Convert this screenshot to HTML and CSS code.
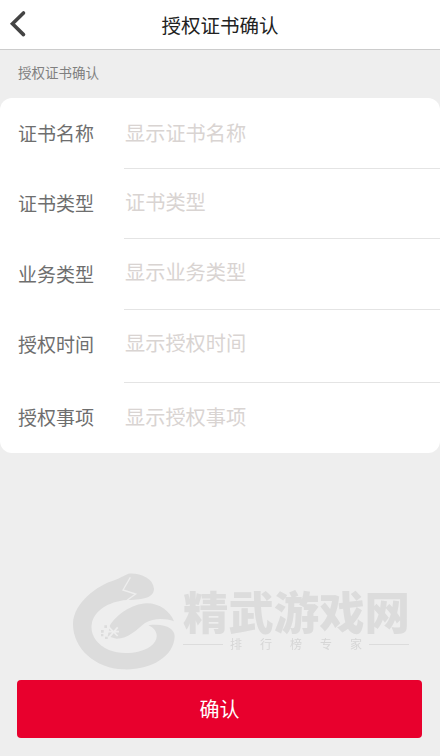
FILE: index.html
```html
<!DOCTYPE html>
<html lang="zh-CN">
<head>
<meta charset="utf-8">
<title>授权证书确认</title>
<link rel="stylesheet" href="styles.css">
</head>
<body>
<div class="page">
  <header class="topbar">
    <svg class="back" width="32" height="48" viewBox="0 0 32 48"><path d="M23.5 13 L12.5 23.8 L23.5 34.6" fill="none" stroke="#444" stroke-width="3.6" stroke-linecap="round" stroke-linejoin="miter"/></svg>
    <h1 class="title">授权证书确认</h1>
  </header>
  <div class="section">授权证书确认</div>
  <section class="card">
    <div class="row row-a"><span class="label">证书名称</span><span class="value">显示证书名称</span></div>
    <div class="row row-b"><span class="label">证书类型</span><span class="value">证书类型</span></div>
    <div class="row row-c"><span class="label">业务类型</span><span class="value">显示业务类型</span></div>
    <div class="row row-d"><span class="label">授权时间</span><span class="value">显示授权时间</span></div>
    <div class="row row-e"><span class="label">授权事项</span><span class="value">显示授权事项</span></div>
  </section>
  <div class="watermark">
    <svg class="logo" width="115" height="105" viewBox="0 0 345 315">
      <path fill="#dcdcdc" d="M150 36 C95 52 27 105 24 165 C22 240 90 302 175 304 C255 307 327 268 329 205 C329 185 305 165 250 172 C280 185 285 215 255 236 C225 256 170 262 132 246 C95 230 76 200 80 170 C85 130 130 100 185 96 C225 95 267 92 267 62 C264 30 225 14 190 17 C178 22 165 30 150 36Z"/>
      <path fill="#dcdcdc" d="M135 172 C155 140 200 108 245 106 C285 106 315 130 327 160 C300 150 265 150 240 165 C215 185 190 212 155 212 L128 205Z"/>
      <path fill="none" stroke="#eeeeee" stroke-width="4" d="M196 28 L174 66 L212 78 L186 97"/>
      <path fill="none" stroke="#eeeeee" stroke-width="5" d="M130 176 L158 204 M158 178 L132 208 M120 191 L162 191"/>
      <path fill="#dcdcdc" d="M108 186h8v8h-8zM108 198h7v7h-7zM118 172h8v8h-8zM120 206h8v7h-8z"/>
    </svg>
    <div class="brand">
      <div class="brand-name">精武游戏网</div>
      <div class="brand-sub"><i class="rule"></i><span class="slogan">排行榜专家</span><i class="rule"></i></div>
    </div>
  </div>
  <button class="confirm" type="button">确认</button>
</div>
</body>
</html>
```
FILE: styles.css
```css
* { box-sizing: border-box; }
html, body { margin: 0; padding: 0; }
body { font-family: "Noto Sans CJK SC", "Noto Sans", sans-serif; background: #eeeeee; }
.page { width: 440px; height: 756px; display: flex; flex-direction: column; background: #eeeeee; overflow: hidden; }
.topbar { height: 50px; flex: none; display: flex; align-items: center; justify-content: center; background: #fff; border-bottom: 1px solid #cccccc; position: relative; }
.back { position: absolute; left: 0; top: 0; }
.title { margin: 0; font-size: 19.5px; font-weight: 400; color: #222; line-height: 48px; }
.section { height: 48px; flex: none; padding-left: 18px; font-size: 13.5px; line-height: 45px; color: #808080; }
.card { flex: none; background: #fff; border-radius: 12px; display: flex; flex-direction: column; }
.row { display: flex; align-items: stretch; }
.row-a { height: 71px; }
.row-b { height: 70px; }
.row-c { height: 71px; }
.row-d { height: 73px; }
.row-e { height: 70px; }
.label { width: 124px; flex: none; padding: 0 0 3px 18px; font-size: 19px; color: #6e6e6e; display: flex; align-items: center; }
.value { flex: 1; padding: 0 0 1px 1px; font-size: 20.2px; color: #d9d4d2; display: flex; align-items: center; border-bottom: 1px solid #e4e4e4; }
.row-b .value, .row-c .value { padding-bottom: 5px; }
.row-d .label, .row-d .value { padding-bottom: 7px; }
.row-e .value { border-bottom: none; padding-bottom: 3px; }
.watermark { flex: none; display: flex; align-items: flex-start; margin: 115px 0 0 65px; height: 112px; }
.logo { flex: none; display: block; filter: blur(0.5px); }
.brand { flex: none; margin: 20px 0 0 3px; width: 226px; filter: blur(0.3px); }
.brand-name { font-size: 45.4px; line-height: 44px; font-weight: 900; color: #dcdcdc; white-space: nowrap; }
.brand-sub { display: flex; align-items: center; justify-content: space-between; height: 16px; margin-top: 4px; }
.rule { display: block; width: 40px; height: 1px; background: #dcdcdc; flex: none; }
.slogan { font-size: 12px; line-height: 16px; color: #d6d6d6; letter-spacing: 18px; margin-right: -18px; white-space: nowrap; }
.confirm { flex: none; width: 405px; height: 58px; margin: auto 0 18px 17px; border: none; border-radius: 4px; background: #e8002d; color: #fff; font-family: inherit; font-size: 20px; padding: 0 0 2px; }
```
